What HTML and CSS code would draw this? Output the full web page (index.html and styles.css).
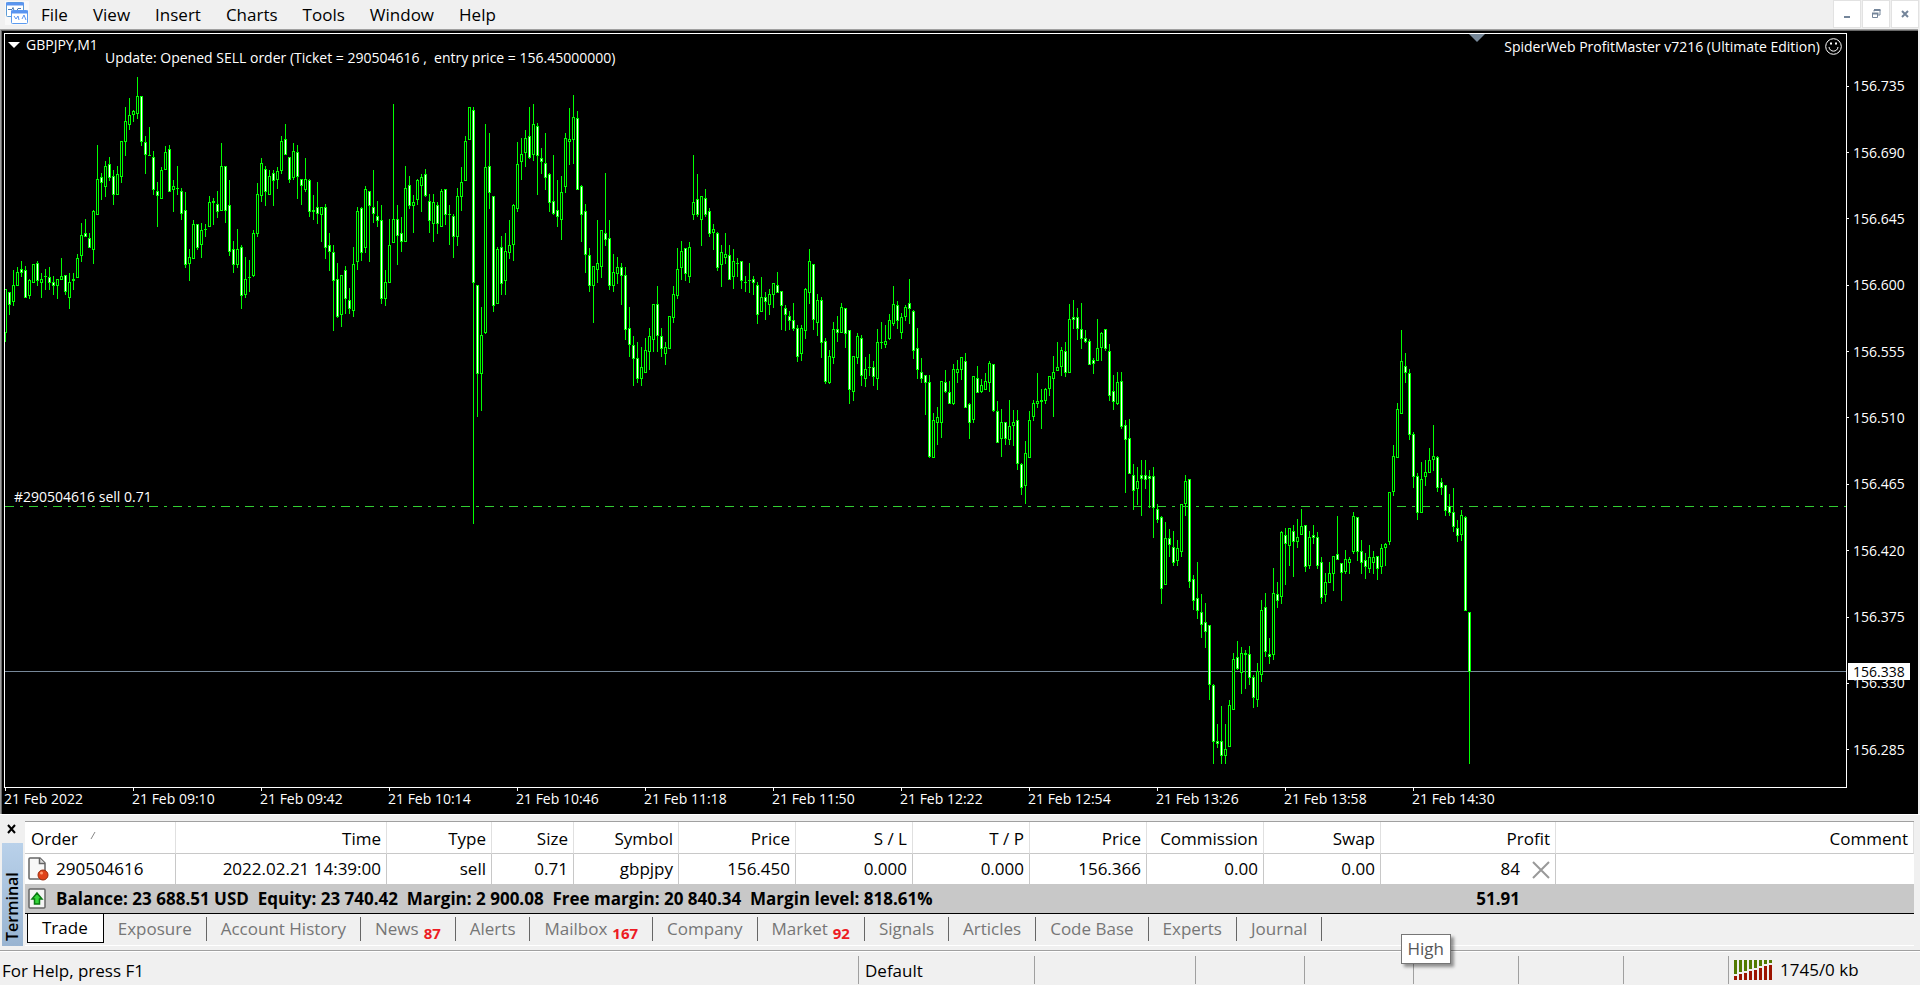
FILE: index.html
```html
<!DOCTYPE html>
<html lang="en">
<head>
    <meta charset="UTF-8">
    <meta name="viewport" content="width=device-width, initial-scale=1.0">
    <title>GBPJPY,M1</title>
    <link rel="stylesheet" href="styles.css">
</head>
<body>
    <header class="menubar">
        <svg class="app-icon" viewBox="0 0 24 24" width="24" height="24">
            <rect width="24" height="24" fill="#f8f8f8"/>
            <rect x="1.5" y="1.5" width="17" height="14" rx="1" fill="#fff" stroke="#5b9bd5"/>
            <path d="M1 3h18" stroke="#5a94f0" stroke-width="3"/>
            <path d="M3 8.5h4l1-2 1 3h3l1-2h3" fill="none" stroke="#4a7ab5"/>
            <rect x="6.5" y="9.5" width="16" height="13" rx="1" fill="#fff" stroke="#5b9bf0"/>
            <path d="M6 11h17" stroke="#5a94f0" stroke-width="3"/>
            <path d="M9 15l2 3 2-3 1 4M17 18l2-4 2 5" fill="none" stroke="#5a94f0"/>
        </svg>
        <nav class="menu">
            <button>File</button>
            <button>View</button>
            <button>Insert</button>
            <button>Charts</button>
            <button>Tools</button>
            <button>Window</button>
            <button>Help</button>
        </nav>
        <div class="window-buttons">
            <button aria-label="Minimize"><svg width="12" height="12" viewBox="0 0 12 12"><path d="M3 9h6" stroke="#74859a" stroke-width="2"/></svg></button>
            <button aria-label="Restore"><svg width="12" height="12" viewBox="0 0 12 12" fill="none" stroke="#74859a"><path d="M4 3.5V2h6v5H8" /><path d="M4 2h6.5M2 5.5h6.5" stroke-width="2"/><path d="M2.5 5v4.5h5V5"/></svg></button>
            <button aria-label="Close"><svg width="12" height="12" viewBox="0 0 12 12"><path d="M3 3l6 6M9 3l-6 6" stroke="#74859a" stroke-width="2"/></svg></button>
        </div>
    </header>

    <main class="chart">
        <div class="plot">
            <svg class="candles" shape-rendering="crispEdges">
                <line class="sell-line" x1="0" y1="472.5" x2="100%" y2="472.5"/>
                <line class="bid-line" x1="0" y1="637.5" x2="100%" y2="637.5"/>
                <path id="candleLines" fill="#00ff00"/>
                <path id="bullFill" fill="#000000"/>
                <path id="bearFill" fill="#ffffff"/>
            </svg>
            <div class="chart-title"><span class="arrow"></span>GBPJPY,M1</div>
            <div class="chart-update">Update: Opened SELL order (Ticket = 290504616 ,&nbsp; entry price = 156.45000000)</div>
            <span class="shift-mark"></span>
            <div class="expert">SpiderWeb ProfitMaster v7216 (Ultimate Edition)
                <svg width="17" height="17" viewBox="0 0 17 17" fill="none" stroke="#fff"><circle cx="8.5" cy="8.5" r="7.8"/><path d="M4 9c.5 5.5 8.5 5.5 9 0"/><path d="M5 5.5h2M10 5.5h2" stroke-width="2"/></svg>
            </div>
            <div class="order-label">#290504616 sell 0.71</div>
        </div>
        <div class="price-axis">
            <span>156.735</span><span>156.690</span><span>156.645</span><span>156.600</span>
            <span>156.555</span><span>156.510</span><span>156.465</span><span>156.420</span>
            <span>156.375</span><span>156.330</span><span>156.285</span>
            <strong class="bid">156.338</strong>
        </div>
        <div class="time-axis">
            <span>21 Feb 2022</span><span>21 Feb 09:10</span><span>21 Feb 09:42</span><span>21 Feb 10:14</span>
            <span>21 Feb 10:46</span><span>21 Feb 11:18</span><span>21 Feb 11:50</span><span>21 Feb 12:22</span>
            <span>21 Feb 12:54</span><span>21 Feb 13:26</span><span>21 Feb 13:58</span><span>21 Feb 14:30</span>
        </div>
    </main>

    <section class="terminal">
        <div class="terminal-side">
            <button class="terminal-close" aria-label="Close"><svg width="10" height="10" viewBox="0 0 10 10"><path d="M1 1l7 8M8 1l-7 8" stroke="#000" stroke-width="2"/></svg></button>
            <div class="terminal-name">Terminal</div>
        </div>
        <div class="terminal-body">
            <table class="orders">
                <colgroup>
                    <col class="w-order"><col class="w-time"><col class="w-type"><col class="w-size"><col class="w-type">
                    <col class="w-num"><col class="w-num"><col class="w-num"><col class="w-num"><col class="w-num"><col class="w-num">
                    <col class="w-profit"><col>
                </colgroup>
                <thead>
                    <tr>
                        <th class="left">Order <svg class="sort" width="6" height="10" viewBox="0 0 6 10"><path d="M1 8l4-7" stroke="#888"/></svg></th>
                        <th>Time</th><th>Type</th><th>Size</th><th>Symbol</th><th>Price</th><th>S / L</th><th>T / P</th>
                        <th>Price</th><th>Commission</th><th>Swap</th><th>Profit</th><th>Comment</th>
                    </tr>
                </thead>
                <tbody>
                    <tr>
                        <td class="left icon-cell">
                            <div class="with-icon">
                                <svg width="22" height="24" viewBox="0 0 22 24">
                                    <path d="M3 1h10l5 5v15q0 1-1 1H3q-1 0-1-1V2q0-1 1-1z" fill="#f8f8f8" stroke="#666" stroke-width="1.5"/>
                                    <path d="M12.5 1v5.5H18" fill="#ddd" stroke="#666" stroke-width="1.5"/>
                                    <circle cx="16" cy="18" r="5" fill="#e0431a" stroke="#9c2c0c"/>
                                    <circle cx="14.5" cy="16" r="1.5" fill="#ff9a70"/>
                                </svg>
                                290504616
                            </div>
                        </td>
                        <td>2022.02.21 14:39:00</td><td>sell</td><td>0.71</td><td>gbpjpy</td><td>156.450</td><td>0.000</td><td>0.000</td>
                        <td>156.366</td><td>0.00</td><td>0.00</td>
                        <td>84<button class="close-order" aria-label="Close order"><svg width="18" height="18" viewBox="0 0 18 18"><path d="M1 1l16 16M17 1L1 17" stroke="#999" stroke-width="2"/></svg></button></td>
                        <td></td>
                    </tr>
                    <tr class="balance">
                        <td class="left icon-cell" colspan="11">
                            <div class="with-icon">
                                <svg width="22" height="24" viewBox="0 0 22 24">
                                    <rect x="2" y="2" width="16" height="19" rx="1" fill="#f4f4f4" stroke="#666" stroke-width="1.5"/>
                                    <path d="M10 6l5 6h-2.5v5h-5v-5H5z" fill="#35d63a" stroke="#0a7a12" stroke-width="1.5"/>
                                </svg>
                                Balance: 23 688.51 USD&nbsp; Equity: 23 740.42&nbsp; Margin: 2 900.08&nbsp; Free margin: 20 840.34&nbsp; Margin level: 818.61%
                            </div>
                        </td>
                        <td class="total">51.91</td>
                        <td></td>
                    </tr>
                </tbody>
            </table>
            <nav class="tabs">
                <button class="active">Trade</button>
                <button>Exposure</button>
                <button>Account History</button>
                <button>News<b>87</b></button>
                <button>Alerts</button>
                <button>Mailbox<b>167</b></button>
                <button>Company</button>
                <button>Market<b>92</b></button>
                <button>Signals</button>
                <button>Articles</button>
                <button>Code Base</button>
                <button>Experts</button>
                <button>Journal</button>
            </nav>
        </div>
    </section>

    <footer class="statusbar">
        <div class="help">For Help, press F1</div>
        <div class="profile">Default</div>
        <div class="date"></div>
        <div class="quote wide"></div>
        <div class="quote wide"></div>
        <div class="quote"></div>
        <div class="quote"></div>
        <div class="quote"></div>
        <div class="traffic">
            <svg width="38" height="20" viewBox="0 0 38 20" shape-rendering="crispEdges">
                <path d="M0 0h3v14H0zM5 0h3v12H5zM10 0h3v11h-3zM15 0h3v9h-3zM20 0h3v8h-3zM25 0h3v6h-3zM30 0h3v4h-3zM35 0h3v3h-3z" fill="#527a00"/>
                <path d="M0 16h3v4H0zM5 14h3v6H5zM10 13h3v7h-3zM15 11h3v9h-3zM20 10h3v10h-3zM25 8h3v12h-3zM30 6h3v14h-3zM35 5h3v15h-3z" fill="#9c1400"/>
            </svg>
            1745/0 kb
        </div>
        <div class="tooltip" role="tooltip">High</div>
    </footer>

    <script src="script.js"></script>
</body>
</html>
```

FILE: styles.css
```css
* { margin: 0; padding: 0; box-sizing: border-box; }
body {
    height: 100vh;
    display: flex;
    flex-direction: column;
    overflow: hidden;
    background: #f0f0f0;
    color: #000;
    font-family: "Segoe UI", "Open Sans", sans-serif;
    font-size: 17px;
    line-height: 24px;
}
button {
    font: inherit;
    color: inherit;
    background: none;
    border: none;
}
svg { display: block; flex: none; }

/* menu */
.menubar {
    height: 29px;
    display: flex;
    align-items: center;
    padding-left: 5px;
}
.app-icon { align-self: flex-start; margin-top: 1px; }
.menu { display: flex; flex: 1; }
.menu button { padding: 0 13px 0 12px; }
.window-buttons { display: flex; gap: 1px; align-self: flex-start; padding-right: 1px; }
.window-buttons button {
    width: 28px;
    height: 28px;
    display: flex;
    align-items: center;
    justify-content: center;
    background: #fff;
    border: 1px solid #e2e2e2;
}

/* chart */
.chart {
    flex: 1;
    min-height: 0;
    display: grid;
    grid-template-columns: 1fr 71px;
    grid-template-rows: 1fr 26px;
    padding: 3px 0 0 3px;
    margin-right: 2px;
    background: #000;
    border-top: 1px solid #a0a0a0;
    border-left: 1px solid #a0a0a0;
    box-shadow: inset 1px 1px #696969;
    color: #fff;
    font-family: Tahoma, "Open Sans", sans-serif;
    font-size: 14px;
    line-height: 16px;
}
.plot {
    position: relative;
    border: 1px solid #fff;
    overflow: hidden;
}
.candles { position: absolute; inset: 0; width: 100%; height: 100%; }
.sell-line { stroke: #32cd32; stroke-dasharray: 9 6 3 6; }
.bid-line { stroke: #778899; }
.chart-title { position: absolute; top: 3px; left: 3px; display: flex; align-items: center; gap: 6px; }
.arrow { border: 6px solid transparent; border-top-color: #fff; border-bottom: 0; }
.chart-update { position: absolute; top: 16px; left: 100px; }
.shift-mark {
    position: absolute;
    top: 0;
    right: 361px;
    border: 8px solid transparent;
    border-top-color: #778899;
    border-bottom: 0;
}
.expert { position: absolute; top: 4px; right: 4px; display: flex; align-items: center; gap: 5px; }
.order-label { position: absolute; top: 455px; left: 9px; }

.price-axis {
    position: relative;
    display: flex;
    flex-direction: column;
    padding: 20px 0 5px;
}
.price-axis span {
    flex: 1;
    display: flex;
    align-items: center;
    gap: 4px;
}
.price-axis span::before { content: ""; width: 2px; height: 1px; background: #fff; }
.bid {
    position: absolute;
    top: 630px;
    left: 1px;
    padding: 0 5px;
    background: #fff;
    color: #000;
    font-weight: normal;
    line-height: 17px;
}
.time-axis { display: flex; overflow: hidden; }
.time-axis span { flex: none; width: 128px; white-space: nowrap; }
.time-axis span::before {
    content: "";
    display: block;
    width: 1px;
    height: 3px;
    margin-left: 1px;
    background: #fff;
}

/* terminal */
.terminal {
    display: flex;
    padding: 7px 6px 4px 2px;
    border-bottom: 1px solid #a0a0a0;
    box-shadow: inset 0 1px #fff;
}
.terminal-side { width: 23px; display: flex; flex-direction: column; }
.terminal-close {
    height: 22px;
    display: flex;
    align-items: flex-start;
    padding: 3px 0 0 5px;
}
.terminal-name {
    flex: 1;
    width: 21px;
    writing-mode: vertical-rl;
    transform: rotate(180deg);
    padding-top: 5px;
    line-height: 21px;
    font-weight: 600;
    font-size: 16px;
    background: linear-gradient(to top, #b9d1ea, #99b4d1);
}
.terminal-body { flex: 1; min-width: 0; border-top: 1px solid #a0a0a0; border-bottom: 1px solid #fff; }
.orders {
    width: 100%;
    table-layout: fixed;
    border-collapse: separate;
    border-spacing: 0;
    background: #fff;
}
.w-order { width: 151px; }
.w-time { width: 211px; }
.w-type { width: 105px; }
.w-size { width: 82px; }
.w-num { width: 117px; }
.w-profit { width: 175px; }
.orders th, .orders td {
    padding: 0 5px;
    text-align: right;
    font-weight: normal;
    white-space: nowrap;
    border-right: 1px solid #c8c8c8;
}
.orders th { height: 32px; padding-top: 2px; border-bottom: 1px solid #c8c8c8; border-right-color: #e0e0e0; }
.orders td { height: 30px; }
.orders td:last-child { border-right: none; }
.orders .left { text-align: left; padding-left: 6px; }
.orders .icon-cell { padding-left: 2px; }
.sort { display: inline-block; margin-left: 8px; vertical-align: 4px; }
.with-icon { display: flex; align-items: center; gap: 7px; }
.close-order { display: inline-block; margin-left: 12px; vertical-align: middle; }
.balance { background: #c8c8c8; }
.orders .balance td { border-right: none; border-bottom: 1px solid #000; font-weight: bold; }
.orders .balance .total { padding-right: 36px; }

.tabs { display: flex; align-items: flex-start; padding: 0 0 2px 2px; color: #767676; }
.tabs button {
    position: relative;
    height: 29px;
    padding: 0 15px 0 14px;
}
.tabs button::after {
    content: "";
    position: absolute;
    top: 3px;
    right: 0;
    width: 1px;
    height: 24px;
    background: #666;
}
.tabs .active {
    background: #fff;
    color: #000;
    border: 2px solid #000;
    border-width: 0 1px 1px;
}
.tabs .active::after { display: none; }
.tabs b { margin-left: 5px; color: #ed1c24; font-size: 15px; vertical-align: -4px; line-height: 14px; }

/* status bar */
.statusbar {
    position: relative;
    height: 34px;
    display: flex;
    align-items: stretch;
    padding: 4px 0 1px;
    border-top: 1px solid #fff;
    line-height: 30px;
}
.statusbar > div { padding-left: 6px; }
.statusbar > div + div { border-left: 1px solid #a0a0a0; }
.statusbar .help { flex: 1; padding-left: 2px; }
.profile { width: 176px; }
.date { width: 161px; }
.quote { width: 105px; }
.quote.wide { width: 109px; }
.statusbar .traffic { width: 192px; display: flex; align-items: center; gap: 8px; padding-left: 5px; }
.statusbar .tooltip {
    position: absolute;
    right: 469px;
    bottom: 21px;
    padding: 0 6px;
    line-height: 28px;
    background: #fff;
    color: #575757;
    border: 1px solid #767676;
    box-shadow: 3px 3px 3px rgba(0, 0, 0, 0.4);
}
```

FILE: script.js
```js
// one candle per minute: high, body top, body bottom, low, 1 = bearish
const candles = [
    [289,289,332,341,0],[292,292,304,314,1],[270,285,301,305,0],[267,272,285,285,0],[261,269,272,276,1],
    [266,270,297,297,1],[279,280,295,298,0],[264,264,282,282,0],[261,263,280,285,1],[273,279,282,297,0],
    [269,276,276,289,0],[267,277,282,289,1],[276,282,285,294,1],[279,279,285,298,0],[258,276,279,279,0],
    [275,275,291,294,1],[273,282,297,308,0],[273,279,280,289,0],[254,258,277,277,0],[223,235,255,261,0],
    [219,233,236,236,1],[233,238,247,247,1],[210,211,249,263,0],[145,179,214,214,0],[173,177,182,199,1],
    [161,166,186,196,0],[157,164,177,180,1],[170,176,194,204,1],[166,174,194,194,0],[141,141,176,182,0],
    [107,121,141,155,0],[98,115,124,129,0],[110,111,114,121,0],[77,96,113,118,0],[96,96,141,145,1],
    [136,142,154,173,1],[127,155,155,155,0],[151,157,189,194,1],[182,191,195,226,1],[167,170,198,198,0],
    [146,152,169,169,0],[145,149,191,191,1],[180,186,189,211,0],[166,188,188,194,0],[188,191,213,219,1],
    [192,210,264,267,1],[249,257,263,280,0],[220,224,258,258,0],[224,224,247,249,1],[223,230,244,257,0],
    [224,229,229,236,0],[196,202,226,226,0],[198,201,202,224,0],[191,204,211,217,1],[143,166,210,210,0],
    [166,166,210,222,1],[180,205,251,255,1],[241,249,264,272,1],[229,249,264,267,0],[245,247,295,308,1],
    [257,279,294,297,0],[260,277,277,291,0],[230,233,275,276,0],[183,194,233,236,0],[158,163,195,201,0],
    [166,169,191,205,1],[170,176,194,194,0],[170,173,180,205,1],[167,171,179,188,0],[136,141,170,173,0],
    [124,139,154,154,1],[157,157,179,182,1],[143,151,177,179,0],[145,152,176,198,1],[179,179,185,204,1],
    [158,179,189,191,0],[179,180,211,216,1],[195,210,211,219,0],[182,207,213,223,1],[207,207,214,241,0],
    [204,207,247,258,1],[233,245,251,270,1],[245,252,280,330,1],[263,279,316,317,1],[275,275,314,326,0],
    [266,270,298,313,1],[288,300,308,313,1],[247,264,310,316,0],[207,211,261,269,0],[207,208,252,260,1],
    [186,189,247,252,0],[191,191,205,261,1],[170,207,213,222,1],[201,216,220,226,1],[205,220,298,303,1],
    [270,282,298,305,0],[219,245,282,282,0],[104,219,242,242,0],[205,219,235,264,1],[217,233,241,251,1],
    [166,188,241,241,0],[176,185,205,208,1],[195,202,205,232,0],[179,180,199,204,0],[174,177,185,211,0],
    [169,174,195,196,1],[194,201,220,232,1],[194,202,223,241,0],[202,205,223,233,1],[189,191,226,226,0],
    [189,189,214,224,1],[205,214,214,244,0],[214,216,236,257,1],[188,196,236,245,0],[167,182,196,210,0],
    [136,141,180,180,0],[107,107,139,139,0],[107,110,282,523,1],[285,285,373,416,1],[307,335,373,410,0],
    [124,167,332,333,0],[133,166,192,208,1],[196,196,305,311,1],[247,249,303,303,0],[236,247,283,294,1],
    [233,251,280,294,0],[220,245,252,258,0],[204,205,244,260,0],[142,164,208,211,0],[138,154,161,179,0],
    [130,138,152,166,0],[107,136,157,158,1],[104,124,154,160,0],[123,126,155,194,1],[148,158,161,173,1],
    [133,163,177,189,1],[173,174,202,211,1],[155,201,213,214,1],[180,210,216,226,1],[176,192,219,239,0],
    [133,138,186,192,0],[108,139,141,164,0],[95,117,139,163,0],[111,118,189,189,1],[185,186,214,241,1],
    [204,211,254,272,1],[248,255,285,291,1],[266,266,285,322,0],[220,263,269,282,0],[230,230,266,277,0],
    [173,233,239,245,1],[220,238,285,289,1],[254,272,285,291,0],[257,267,273,283,0],[263,267,275,304,1],
    [267,275,329,339,1],[307,328,344,356,1],[336,345,358,385,1],[342,358,378,382,1],[347,367,378,385,0],
    [338,350,372,372,0],[328,336,351,369,0],[304,304,339,351,0],[286,304,335,351,1],[328,336,348,356,1],
    [342,347,353,364,0],[316,316,348,348,0],[286,294,317,322,0],[248,269,295,298,0],[241,251,267,279,0],
    [248,248,273,280,1],[242,247,276,282,0],[155,202,214,219,0],[174,199,214,216,1],[196,196,219,245,0],
    [189,198,214,216,1],[208,211,233,236,1],[224,229,232,249,0],[232,233,267,270,1],[245,252,264,286,0],
    [233,254,257,263,0],[245,255,279,279,1],[249,261,276,288,0],[258,263,263,276,0],[261,261,280,288,1],
    [276,282,282,291,0],[263,280,280,292,0],[276,279,282,294,1],[282,285,314,323,1],[277,297,311,311,0],
    [292,297,301,319,1],[289,294,304,314,0],[283,283,294,307,0],[272,285,292,292,1],[291,291,305,329,1],
    [305,308,314,330,1],[311,316,320,329,1],[303,320,328,330,1],[325,328,356,361,1],[325,328,353,360,0],
    [288,289,330,338,0],[249,261,292,303,0],[264,264,319,329,1],[294,300,322,335,0],[297,300,342,357,1],
    [338,341,381,383,1],[350,356,382,383,0],[322,329,357,363,0],[316,329,332,341,1],[303,307,332,332,0],
    [308,308,333,347,1],[330,330,389,403,1],[356,356,391,400,0],[333,336,357,363,0],[335,338,375,385,1],
    [357,369,378,386,0],[354,367,367,375,0],[361,367,376,385,1],[329,342,378,389,0],[322,342,342,348,0],
    [325,341,344,347,0],[314,320,338,339,0],[286,304,323,325,0],[301,305,320,328,1],[313,317,332,338,0],
    [305,307,316,320,0],[279,303,308,323,1],[310,311,350,358,1],[328,348,369,378,1],[358,372,378,382,1],
    [375,375,382,414,1],[375,382,456,457,1],[413,420,457,457,0],[407,417,422,444,0],[381,381,422,437,0],
    [370,382,391,392,1],[381,392,403,403,1],[364,369,403,404,0],[360,369,372,382,0],[357,357,369,379,0],
    [353,361,407,407,1],[403,404,422,438,1],[376,376,419,422,0],[366,378,392,392,1],[379,385,391,392,0],
    [373,381,389,389,0],[361,363,382,391,0],[364,364,410,411,1],[401,411,442,442,1],[409,422,438,456,0],
    [422,422,438,444,1],[400,426,439,444,0],[410,422,425,445,0],[410,420,463,469,1],[463,464,487,494,1],
    [441,453,485,503,0],[411,420,457,457,0],[400,403,416,420,0],[373,401,403,407,0],[389,400,401,428,0],
    [388,389,400,403,0],[376,376,388,395,0],[356,372,378,416,0],[342,367,370,370,0],[347,350,366,375,0],
    [342,351,372,376,1],[304,319,372,372,0],[300,317,319,328,1],[308,317,328,339,1],[303,329,338,348,1],
    [330,338,341,342,1],[339,341,364,364,1],[358,360,363,373,1],[319,348,360,360,0],[332,333,347,360,0],
    [329,329,348,350,1],[344,351,395,400,1],[375,391,401,409,1],[372,382,403,404,0],[372,381,426,428,1],
    [420,425,439,492,1],[419,438,473,473,1],[464,475,490,509,1],[467,481,488,504,0],[460,475,478,515,1],
    [460,475,479,488,1],[470,476,478,507,1],[467,476,507,537,1],[504,509,519,522,1],[516,517,588,603,1],
    [522,538,584,584,0],[529,538,544,556,1],[531,547,562,565,1],[540,548,560,565,0],[504,504,551,556,0],
    [475,481,503,515,0],[479,479,581,587,1],[575,579,600,609,1],[562,598,610,618,1],[594,612,624,637,1],
    [603,622,631,647,1],[625,625,684,699,1],[684,685,741,763,1],[724,741,743,747,1],[706,741,755,763,1],
    [724,749,755,763,0],[700,705,746,746,0],[653,659,709,709,0],[641,657,668,669,1],[647,653,672,693,0],
    [650,653,654,688,0],[646,654,677,684,1],[675,677,697,707,1],[663,671,699,706,0],[600,610,674,681,0],
    [593,607,651,656,1],[638,654,656,663,1],[568,593,654,659,0],[582,594,600,607,1],[531,532,596,603,0],
    [528,535,543,584,1],[528,528,545,565,0],[525,531,541,576,1],[519,537,541,547,0],[509,526,534,534,0],
    [525,525,566,571,1],[531,537,565,568,0],[525,535,537,543,1],[532,537,565,568,1],[557,562,597,603,1],
    [573,582,594,601,0],[562,573,582,582,0],[556,556,573,590,0],[516,554,559,559,1],[563,563,572,600,1],
    [550,559,571,573,0],[557,559,562,573,0],[512,516,551,553,0],[517,517,551,560,1],[540,551,562,573,1],
    [553,560,566,578,1],[545,557,568,572,0],[551,557,562,573,0],[556,556,568,579,1],[544,548,566,573,0],
    [543,544,547,565,0],[492,492,541,544,0],[445,456,491,495,0],[403,409,457,457,0],[330,361,413,413,0],
    [353,366,372,382,1],[369,373,434,439,1],[432,434,476,487,1],[473,476,512,519,1],[462,479,512,512,0],
    [460,472,476,485,0],[448,460,472,472,0],[425,456,459,470,0],[456,457,487,491,1],[478,482,487,494,1],
    [485,485,510,515,1],[494,506,512,515,1],[488,512,526,531,1],[520,528,535,541,1],[510,515,534,540,0],
    [516,517,610,610,1],[612,612,671,763,1]
];

const STEP = 4;   // px per bar
const TOP = 34;   // menu bar and frame above the plot

let lines = '';
let bull = '';
let bear = '';

candles.forEach(([high, top, bottom, low, down], i) => {
    const x = i * STEP;
    const bodyHeight = bottom - top + 1;
    lines += `M${x} ${high - TOP}h1v${low - high + 1}h-1z`;
    lines += `M${x - 1} ${top - TOP}h3v${bodyHeight}h-3z`;
    if (bodyHeight > 2) {
        const inner = `M${x} ${top - TOP + 1}h1v${bodyHeight - 2}h-1z`;
        if (down) bear += inner; else bull += inner;
    }
});

document.getElementById('candleLines').setAttribute('d', lines);
document.getElementById('bullFill').setAttribute('d', bull);
document.getElementById('bearFill').setAttribute('d', bear);
```
